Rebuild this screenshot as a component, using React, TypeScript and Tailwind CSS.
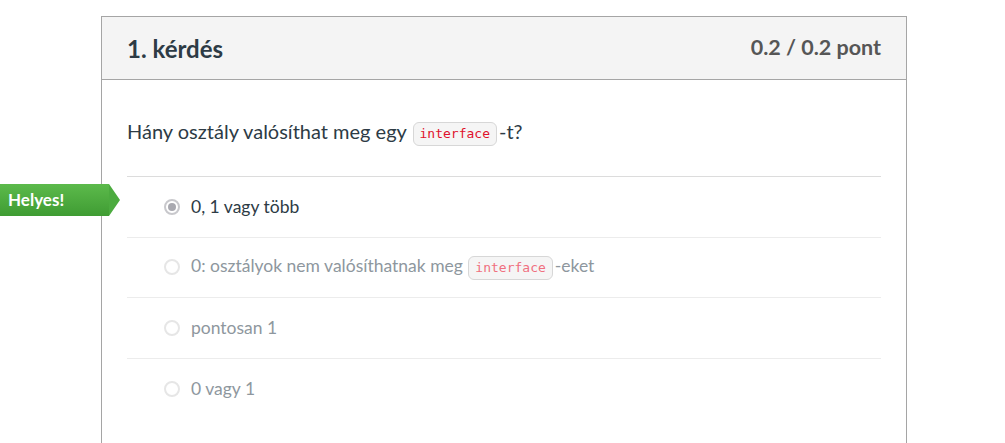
import React from "react";

function Code({ faded }: { faded?: boolean }) {
  return (
    <code
      className={`ml-[1px] mr-[2px] inline-block rounded-[6px] border border-[#d7d7d7] bg-[#f5f5f5] px-[6px] py-[2px] align-middle text-[13px] leading-[18px] ${
        faded ? "text-[#f0707f]" : "text-[#e0112c]"
      }`}
      style={{ fontFamily: '"DejaVu Sans Mono", "Liberation Mono", monospace' }}
    >
      interface
    </code>
  );
}

function Radio({ checked }: { checked?: boolean }) {
  return (
    <span
      className={`inline-flex h-[16px] w-[16px] shrink-0 items-center justify-center rounded-full border-2 ${
        checked ? "border-[#c8c8cc] bg-white" : "border-[#e6e6e6] bg-white"
      }`}
    >
      {checked && <span className="h-[8px] w-[8px] rounded-full bg-[#a9a9b0]" />}
    </span>
  );
}

export default function App() {
  const answers: { content: React.ReactNode; checked?: boolean }[] = [
    { content: <>0, 1 vagy több</>, checked: true },
    {
      content: (
        <>
          0: osztályok nem valósíthatnak meg <Code faded />-eket
        </>
      ),
    },
    { content: <>pontosan 1</> },
    { content: <>0 vagy 1</> },
  ];
  return (
    <div
      className="relative h-[443px] w-[1005px] overflow-hidden bg-white"
      style={{ fontFamily: 'Lato, "Noto Sans", sans-serif' }}
    >
      <div className="ml-[101px] mt-[16px] h-[460px] w-[806px] border border-[#a5a5a5]">
        <div className="flex h-[63px] items-start justify-between border-b border-[#a5a5a5] bg-[#f4f4f4] px-[25px] pt-[16px]">
          <h2 className="text-[24px] font-bold leading-[32px] text-[#2d3b45]">1. kérdés</h2>
          <div className="text-[21.5px] font-bold leading-[28px] text-[#565656]">0.2 / 0.2 pont</div>
        </div>
        <div className="px-[25px]">
          <div className="flex h-[97px] items-center border-b border-[#dcdcdc] pt-[6px] text-[20px] text-[#2d3b45]">
            <span>
              Hány osztály valósíthat meg egy <Code />-t?
            </span>
          </div>
          {answers.map((a, i) => (
            <div
              key={i}
              className={`flex h-[60.5px] items-center gap-[11px] pl-[37px] text-[17.5px] ${
                i < answers.length - 1 ? "border-b border-[#ececec]" : ""
              } ${a.checked ? "text-[#2d3b45]" : "text-[#8e979e]"}`}
            >
              <Radio checked={a.checked} />
              <span className="leading-[24px]">{a.content}</span>
            </div>
          ))}
        </div>
      </div>
      <div className="absolute left-0 top-[184px] flex h-[32px] items-center">
        <div className="flex h-[32px] w-[109px] items-center bg-gradient-to-b from-[#5cba4b] to-[#3f9c33] pl-[8px] text-[17px] font-bold text-white">
          Helyes!
        </div>
        <div className="h-0 w-0 border-y-[16px] border-l-[11px] border-y-transparent border-l-[#4cab3f]" />
      </div>
    </div>
  );
}
